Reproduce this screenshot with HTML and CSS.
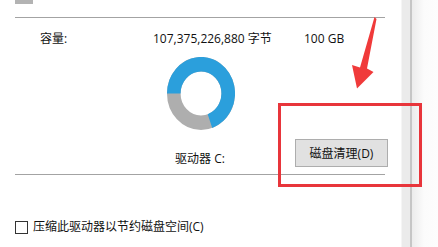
FILE: index.html
```html
<!DOCTYPE html>
<html lang="zh-CN">
<head>
<meta charset="utf-8">
<title>驱动器属性</title>
<link rel="stylesheet" href="styles.css">
</head>
<body>
<div class="window">
  <main class="panel">
    <div class="top-block"></div>
    <div class="rule rule-top"></div>
    <div class="capacity">
      <span>容量:</span>
      <span>107,375,226,880 字节</span>
      <span>100 GB</span>
    </div>
    <div class="chart">
      <svg class="donut" width="68" height="73" viewBox="0 0 100 100" preserveAspectRatio="none">
        <circle cx="50" cy="50" r="40" fill="none" stroke="#aeaeae" stroke-width="20"/>
        <path d="M10 50 A40 40 0 1 1 63.2 87.7" fill="none" stroke="#2b9fdc" stroke-width="20"/>
      </svg>
    </div>
    <div class="drive-row">
      <span class="drive-label">驱动器 C:</span>
      <button class="clean-btn">磁盘清理(D)</button>
    </div>
    <div class="rule rule-bottom"></div>
    <label class="compress">
      <span class="checkbox"></span>
      <span>压缩此驱动器以节约磁盘空间(C)</span>
    </label>
  </main>
  <div class="strip"></div>
  <div class="beyond"></div>

  <div class="highlight"></div>
  <svg class="arrow" width="438" height="247" viewBox="0 0 438 247">
    <polygon points="374.5,17 376.5,19 367,68.5 373.5,72 357,88.5 352,65 360,67.5" fill="#f03a3a"/>
  </svg>
</div>
</body>
</html>
```
FILE: styles.css
```css
html, body {
  margin: 0;
  padding: 0;
  background: #ffffff;
}

body {
  font-family: "Open Sans", "Noto Sans CJK SC", sans-serif;
  font-size: 12px;
  color: #111;
}

.window {
  position: relative;
  display: flex;
  width: 438px;
  height: 247px;
  overflow: hidden;
}

.panel {
  width: 370px;
  padding-left: 15px;
  padding-right: 16px;
  flex: none;
  display: flex;
  flex-direction: column;
}

.top-block {
  width: 18px;
  height: 4px;
  background: #b3b3b3;
}

.rule {
  border-top: 1px solid #a3a3a3;
}

.rule-top {
  margin-top: 13px;
}

.capacity {
  margin-top: 13px;
  padding-left: 25px;
  display: grid;
  grid-template-columns: 113px 151px auto;
  line-height: 16px;
  white-space: nowrap;
}

.chart {
  margin-top: 10px;
  display: flex;
  justify-content: center;
  padding-left: 2px;
}

.donut {
  display: block;
}

.drive-row {
  margin-top: 9px;
  display: grid;
  grid-template-columns: 1fr auto 1fr;
  align-items: start;
}

.drive-label {
  grid-column: 2;
  margin-top: 12px;
  line-height: 16px;
  white-space: nowrap;
}

.clean-btn {
  grid-column: 3;
  justify-self: end;
  margin-right: -3px;
  width: 93px;
  height: 28px;
  padding: 0;
  background: #e1e1e1;
  border: 1px solid #adadad;
  border-radius: 0;
  font-family: "Open Sans", "Noto Sans CJK SC", sans-serif;
  font-size: 12px;
  color: #111;
}

.rule-bottom {
  margin-top: 7px;
}

.compress {
  margin-top: 44px;
  display: flex;
  align-items: center;
  gap: 5px;
  line-height: 16px;
  white-space: nowrap;
}

.checkbox {
  width: 11px;
  height: 11px;
  border: 1px solid #333;
  background: #fff;
  flex: none;
}

.strip {
  width: 8px;
  flex: none;
  background: #ebebeb;
  border-left: 1px solid #f5f5f5;
  border-right: 2px solid #c6c6c6;
}

.beyond {
  flex: 1;
  background: linear-gradient(to right, #ececec, #fbfbfb 12px, #fdfdfd);
}

.highlight {
  position: absolute;
  left: 278px;
  top: 103px;
  width: 138px;
  height: 78px;
  border: 3px solid #e8353b;
}

.arrow {
  position: absolute;
  left: 0;
  top: 0;
}
```
